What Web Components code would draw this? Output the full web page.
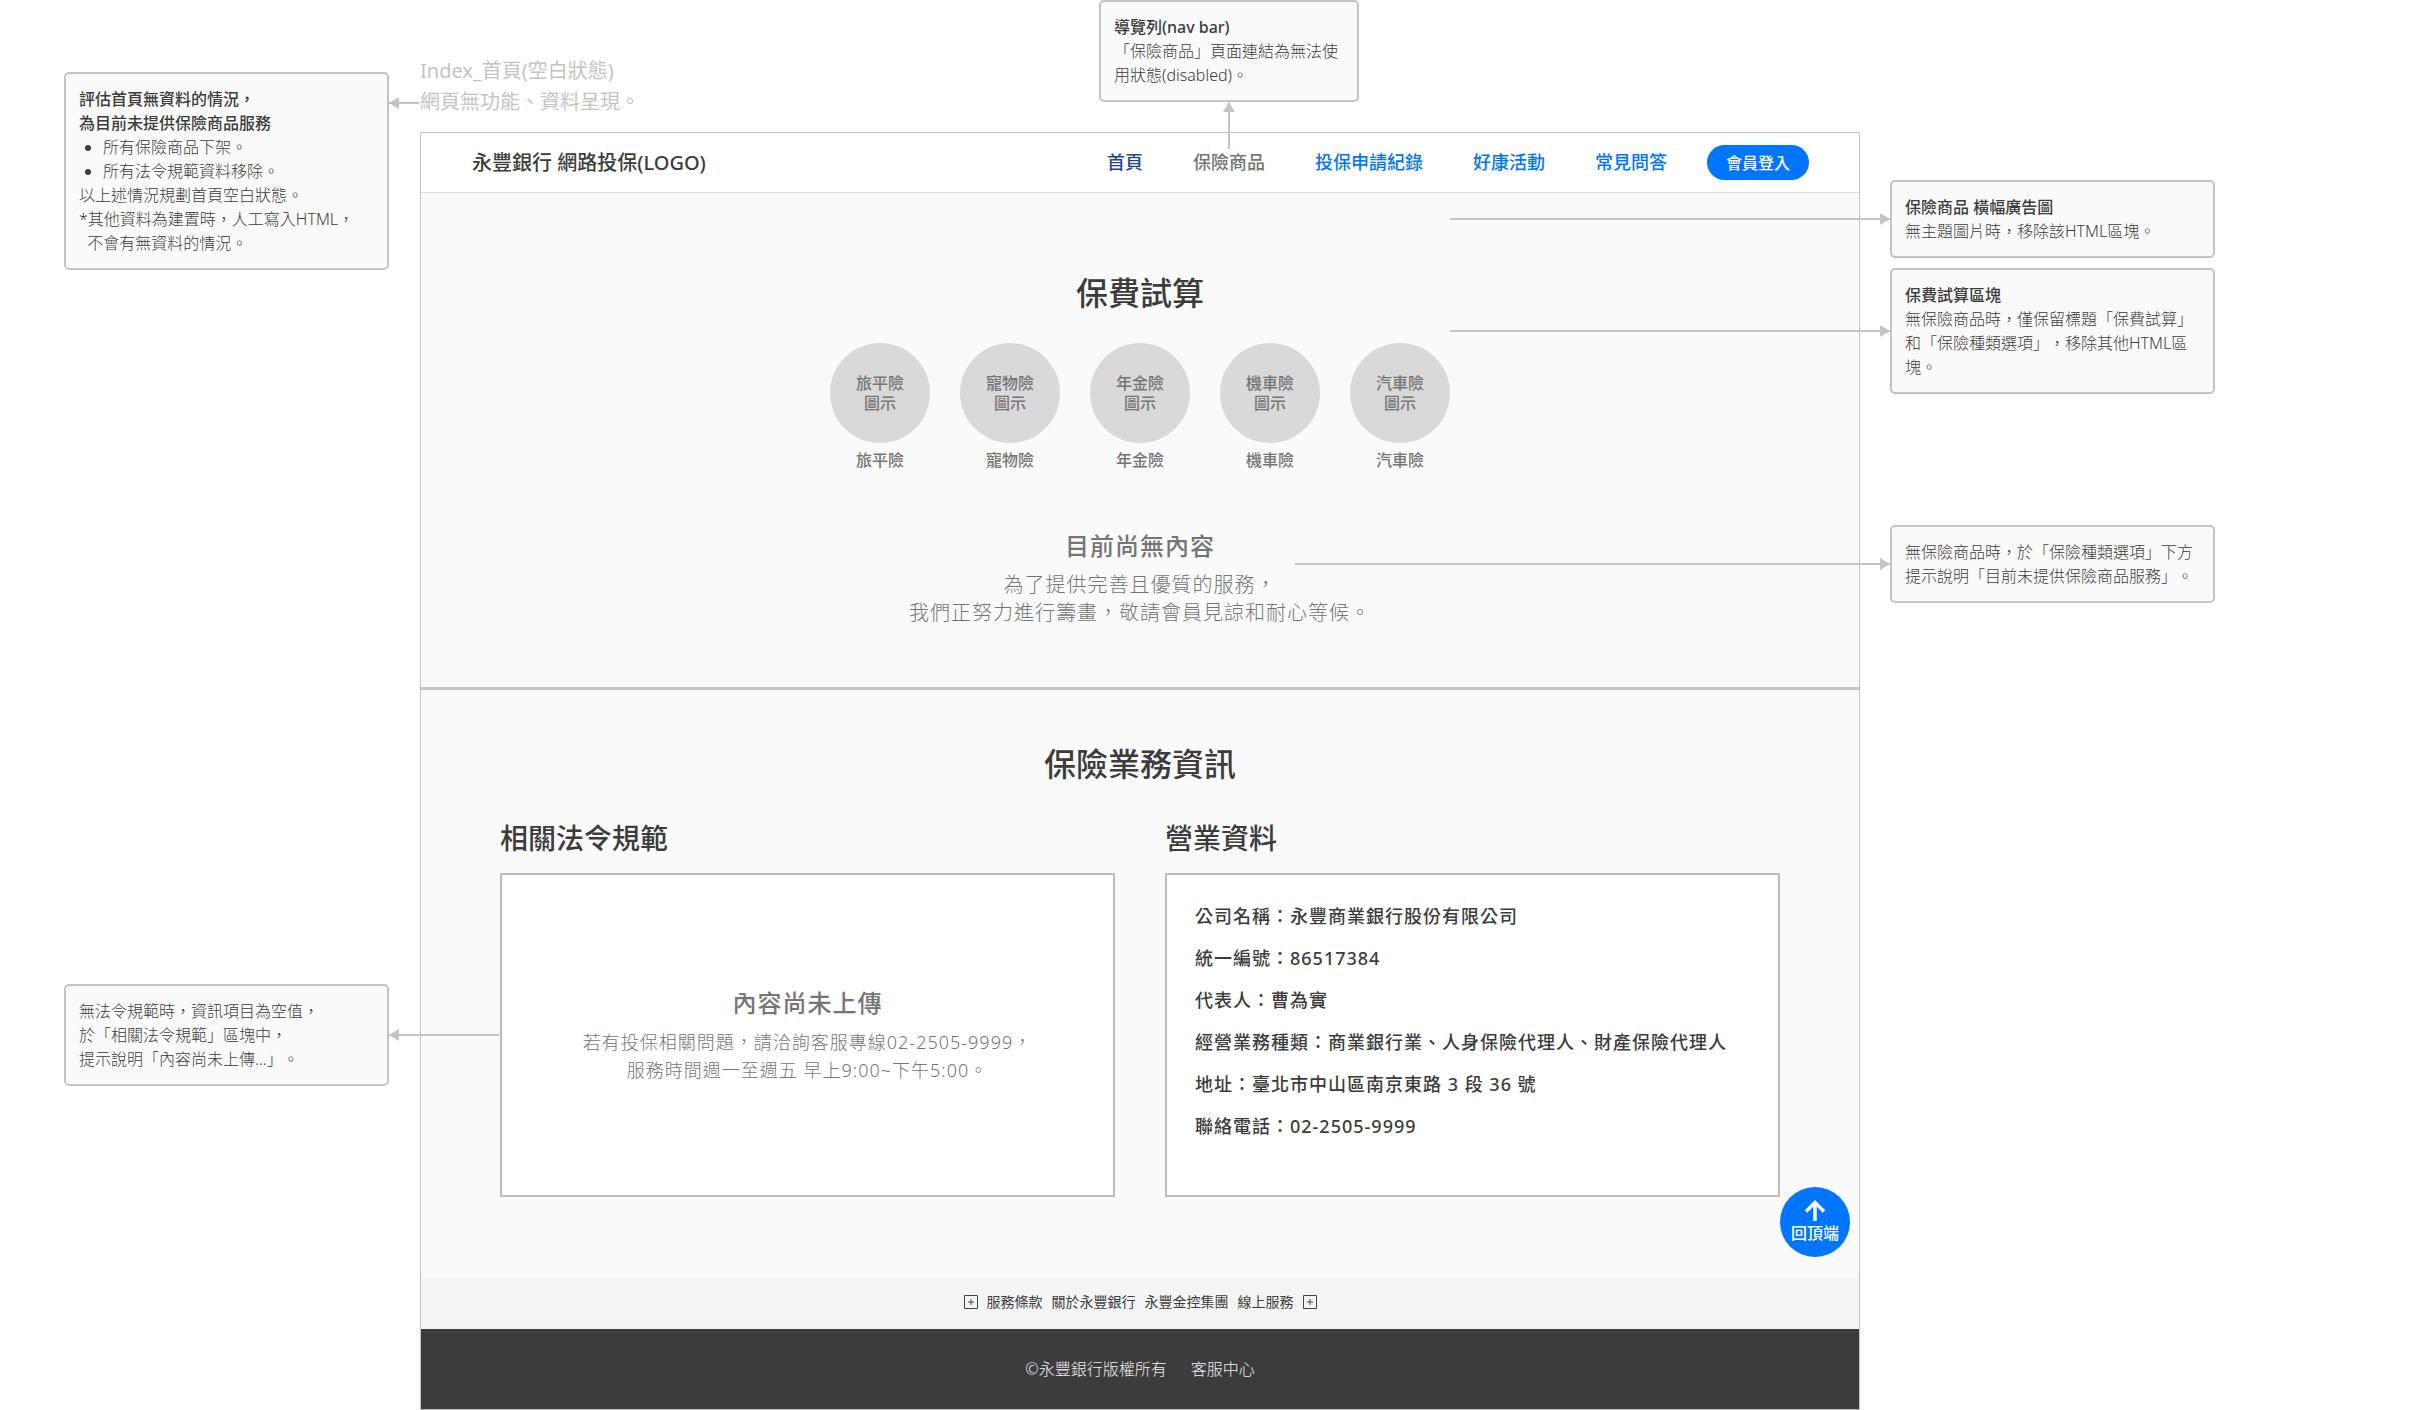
<!DOCTYPE html>
<html lang="zh-Hant-TW">
<head>
<meta charset="utf-8">
<title>Index_首頁(空白狀態)</title>
<style>
  body {
    margin: 0;
    background: #fff;
    color: #3c3c3c;
    font-family: "Noto Sans", "Noto Sans CJK TC", sans-serif;
    font-size: 16px;
    line-height: 24px;
    text-spacing-trim: space-all;
    --line: #c4c4c4;
    --blue: #0075ff;
    --muted: #757575;
  }
  b { font-weight: 500; }
</style>
</head>
<body>
<spec-board>
  <spec-note slot="left" class="n1" dir-to="left" style="--reach:30px;--at:28px">
    <b>評估首頁無資料的情況，<br>為目前未提供保險商品服務</b>
    <ul style="margin:0;padding-left:24px">
      <li>所有保險商品下架。</li>
      <li>所有法令規範資料移除。</li>
    </ul>
    以上述情況規劃首頁空白狀態。<br>*其他資料為建置時，人工寫入HTML，<br>&nbsp;&nbsp;不會有無資料的情況。
  </spec-note>
  <spec-note slot="left" class="n2" dir-to="left" style="--reach:110px;--at:48px">無法令規範時，資訊項目為空值，<br>於「相關法令規範」區塊中，<br>提示說明「內容尚未上傳...」。</spec-note>

  <span slot="title">Index_首頁(空白狀態)<br>網頁無功能、資料呈現。</span>
  <spec-note slot="top" dir-to="up" style="--reach:47px;--at:127px"><b>導覽列(nav bar)</b><br>「保險商品」頁面連結為無法使用狀態(disabled)。</spec-note>

  <page-frame slot="page">
    <site-nav slot="nav">永豐銀行 網路投保(LOGO)</site-nav>
    <quote-section slot="quote">
      <kind-item>旅平險</kind-item>
      <kind-item>寵物險</kind-item>
      <kind-item>年金險</kind-item>
      <kind-item>機車險</kind-item>
      <kind-item>汽車險</kind-item>
      <empty-state slot="empty" wide>
        <span slot="title">目前尚無內容</span>為了提供完善且優質的服務，<br>我們正努力進行籌畫，敬請會員見諒和耐心等候。
      </empty-state>
    </quote-section>
    <info-section slot="info">
      <info-card slot="rules" heading="相關法令規範">
        <empty-state>
          <span slot="title">內容尚未上傳</span>若有投保相關問題，請洽詢客服專線02-2505-9999，<br>服務時間週一至週五 早上9:00~下午5:00。
        </empty-state>
      </info-card>
      <info-card slot="company" heading="營業資料"><company-data></company-data></info-card>
    </info-section>
    <site-footer slot="footer"></site-footer>
  </page-frame>

  <spec-note slot="right" class="n3" dir-to="right" style="--reach:440px;--at:36px"><b>保險商品 橫幅廣告圖</b><br>無主題圖片時，移除該HTML區塊。</spec-note>
  <spec-note slot="right" dir-to="right" style="--reach:440px;--at:60px"><b>保費試算區塊</b><br>無保險商品時，僅保留標題「保費試算」和「保險種類選項」，移除其他HTML區塊。</spec-note>
  <spec-note slot="right" class="n5" dir-to="right" style="--reach:595px;--at:36px">無保險商品時，於「保險種類選項」下方提示說明「目前未提供保險商品服務」。</spec-note>
</spec-board>

<script>
  const define = (name, html, setup) => {
    const template = document.createElement('template');
    template.innerHTML = html;
    customElements.define(name, class extends HTMLElement {
      constructor() {
        super();
        this.attachShadow({ mode: 'open' }).append(template.content.cloneNode(true));
      }
      connectedCallback() { if (setup) setup(this, this.shadowRoot); }
    });
  };

  /* Three columns: notes, the page itself, notes. */
  define('spec-board', `
    <style>
      :host { display: grid; grid-template-columns: 420px minmax(0, 1fr) 550px; align-items: start; }
      .left { padding: 72px 31px 0 64px; display: flex; flex-direction: column; gap: 714px; }
      .right { padding: 180px 195px 0 30px; display: flex; flex-direction: column; gap: 10px; }
      ::slotted(.n5) { margin-top: 121px; }
      header { display: flex; justify-content: space-between; height: 132px; padding-right: 501px; align-items: flex-start; }
      h1 { margin: 0; padding-top: 55px; font-size: 20px; line-height: 31px; font-weight: 400; color: var(--line); }
      .top { width: 260px; }
    </style>
    <div class="left"><slot name="left"></slot></div>
    <div>
      <header><h1><slot name="title"></slot></h1><div class="top"><slot name="top"></slot></div></header>
      <slot name="page"></slot>
    </div>
    <div class="right"><slot name="right"></slot></div>`);

  /* A note with an arrow; --reach is the arrow's length, --at its place along the edge. */
  define('spec-note', `
    <style>
      :host { display: block; position: relative; box-sizing: border-box; padding: 13px; border: 2px solid var(--line); border-radius: 5px; background: #fafafa; font-weight: 300; }
      .arrow { position: absolute; background: var(--line); z-index: 2; }
      .arrow::after { content: ""; position: absolute; border: 6px solid transparent; }
      :host([dir-to="left"]) .arrow { left: calc(100% + 2px); top: var(--at); width: var(--reach); height: 2px; }
      :host([dir-to="left"]) .arrow::after { left: 0; top: -5px; border-left: 0; border-right: 10px solid var(--line); }
      :host([dir-to="right"]) .arrow { right: calc(100% + 2px); top: var(--at); width: var(--reach); height: 2px; }
      :host([dir-to="right"]) .arrow::after { right: 0; top: -5px; border-right: 0; border-left: 10px solid var(--line); }
      :host([dir-to="up"]) .arrow { top: calc(100% + 2px); left: var(--at); height: var(--reach); width: 2px; }
      :host([dir-to="up"]) .arrow::after { top: 0; left: -5px; border-top: 0; border-bottom: 10px solid var(--line); }
    </style>
    <slot></slot><i class="arrow"></i>`);

  define('page-frame', `
    <style>
      :host { display: block; position: relative; border: 1px solid var(--line); background: #fafafa; }
      button { position: absolute; right: 9px; bottom: 152px; width: 70px; height: 70px; padding: 0; border: 0; border-radius: 50%; background: var(--blue); color: #fff; font: 500 16px/24px "Noto Sans", "Noto Sans CJK TC", sans-serif; display: flex; flex-direction: column; align-items: center; justify-content: center; }
    </style>
    <slot name="nav"></slot>
    <main><slot name="quote"></slot><slot name="info"></slot></main>
    <slot name="footer"></slot>
    <button type="button">
      <svg width="22" height="22" viewBox="0 0 22 22" fill="none" stroke="#fff" stroke-width="3.500"><path d="M11 22V4M2 12.500L11 3.500L20 12.500"/></svg>
      回頂端
    </button>`);

  define('site-nav', `
    <style>
      :host { display: flex; align-items: center; justify-content: space-between; height: 59px; padding: 0 50px 0 51px; background: #fff; border-bottom: 1px solid #dcdcdc; }
      .logo { font-size: 20px; font-weight: 500; }
      nav { display: flex; align-items: center; gap: 50px; font-size: 18px; font-weight: 500; }
      a { color: var(--blue); text-decoration: none; padding-bottom: 2px; }
      a[aria-current] { color: #1f478f; }
      a[aria-disabled] { color: var(--muted); }
      button { height: 35px; margin-left: -10px; padding: 0 19px; border: 0; border-radius: 18px; background: var(--blue); color: #fff; font: 500 16px/24px "Noto Sans", "Noto Sans CJK TC", sans-serif; }
    </style>
    <div class="logo"><slot></slot></div>
    <nav>
      <a href="#home" aria-current="page">首頁</a>
      <a href="#products" aria-disabled="true">保險商品</a>
      <a href="#records">投保申請紀錄</a>
      <a href="#events">好康活動</a>
      <a href="#faq">常見問答</a>
      <button type="button">會員登入</button>
    </nav>`);

  define('quote-section', `
    <style>
      :host { display: flex; flex-direction: column; align-items: center; padding: 76px 0 60px; border-bottom: 3px solid var(--line); }
      h2 { margin: 0 0 26px; font-size: 32px; line-height: 48px; font-weight: 500; }
      .kinds { display: flex; gap: 30px; margin-bottom: 60px; }
    </style>
    <h2>保費試算</h2>
    <div class="kinds"><slot></slot></div>
    <slot name="empty"></slot>`);

  define('kind-item', `
    <style>
      :host { display: block; }
      a { display: flex; flex-direction: column; align-items: center; gap: 7px; color: var(--muted); text-decoration: none; font-weight: 500; line-height: 20px; text-align: center; }
      .disc { display: flex; flex-direction: column; align-items: center; justify-content: center; width: 100px; height: 100px; border-radius: 50%; background: #d9d9d9; }
    </style>
    <a href="#kind"><span class="disc"><span class="name"></span><span>圖示</span></span><slot></slot></a>`,
    (el, root) => { root.querySelector('.name').textContent = el.textContent; });

  define('empty-state', `
    <style>
      :host { display: block; text-align: center; color: var(--muted); font-size: 18px; line-height: 28px; font-weight: 300; letter-spacing: 1px; }
      :host([wide]) { font-size: 20px; }
      h4 { margin: 0 0 9px; font-size: 24px; line-height: 32px; font-weight: 500; }
      p { margin: 0; }
    </style>
    <h4><slot name="title"></slot></h4>
    <p><slot></slot></p>`);

  define('info-section', `
    <style>
      :host { display: block; padding: 50px 79px 80px; }
      h2 { margin: 0 0 30px; font-size: 32px; line-height: 48px; font-weight: 500; text-align: center; }
      .cards { display: grid; grid-template-columns: 1fr 1fr; gap: 50px; }
    </style>
    <h2>保險業務資訊</h2>
    <div class="cards"><slot name="rules"></slot><slot name="company"></slot></div>`);

  define('info-card', `
    <style>
      :host { display: flex; flex-direction: column; gap: 15px; }
      h3 { margin: 0; font-size: 28px; line-height: 40px; font-weight: 500; }
      .box { flex: 1; display: grid; align-items: center; border: 2px solid #bdbdbd; background: #fff; }
    </style>
    <h3></h3>
    <div class="box"><slot></slot></div>`,
    (el, root) => { root.querySelector('h3').textContent = el.getAttribute('heading'); });

  define('company-data', `
    <style>
      :host { display: block; padding: 20px 28px 48px; font-size: 18px; line-height: 42px; font-weight: 500; letter-spacing: 1px; }
      p { margin: 0; }
    </style>
    <p>公司名稱：永豐商業銀行股份有限公司</p>
    <p>統一編號：86517384</p>
    <p>代表人：曹為實</p>
    <p>經營業務種類：商業銀行業、人身保險代理人、財產保險代理人</p>
    <p>地址：臺北市中山區南京東路 3 段 36 號</p>
    <p>聯絡電話：02-2505-9999</p>`);

  define('site-footer', `
    <style>
      :host { display: block; }
      a { color: inherit; text-decoration: none; }
      .links { display: flex; align-items: center; justify-content: center; gap: 9px; height: 50px; padding-bottom: 2px; background: #f4f4f4; font-size: 14px; }
      .legal { display: flex; align-items: center; justify-content: center; gap: 24px; height: 80px; background: #3c3c3c; color: #f0f0f0; font-weight: 300; }
    </style>
    <div class="links">
      <svg width="14" height="14" viewBox="0 0 14 14" fill="none" stroke="#444"><path d="M.5.5h13v13H.5zM7 4v6M4 7h6" stroke-width="1"/></svg>
      <a href="#terms">服務條款</a><a href="#about">關於永豐銀行</a><a href="#group">永豐金控集團</a><a href="#online">線上服務</a>
      <svg width="14" height="14" viewBox="0 0 14 14" fill="none" stroke="#444"><path d="M.5.5h13v13H.5zM7 4v6M4 7h6" stroke-width="1"/></svg>
    </div>
    <div class="legal"><span>©永豐銀行版權所有</span><a href="#service">客服中心</a></div>`);
</script>
</body>
</html>
